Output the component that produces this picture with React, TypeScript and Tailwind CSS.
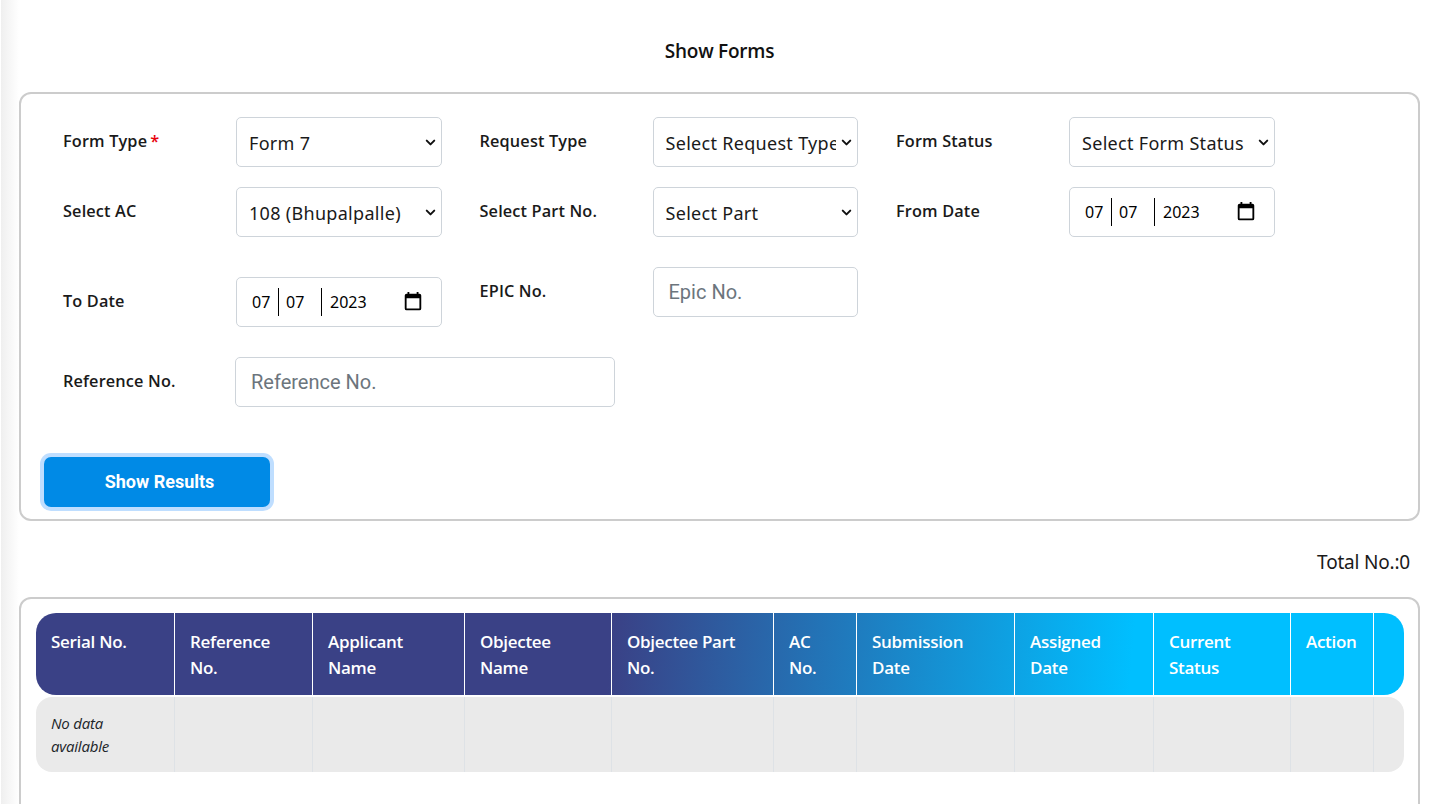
import React from "react"
import { ChevronDown } from "lucide-react"

const font = "font-['Open_Sans','Noto_Sans',sans-serif]"

function Label({ children }: { children: React.ReactNode }) {
  return (
    <label className="w-[173px] shrink-0 mb-[2px] text-[16.3px] leading-6 font-[550] text-[#1a1a1a] tracking-[0.15px]">
      {children}
    </label>
  )
}

function Select({ value, options, width = "w-[206px]" }: { value: string; options: string[]; width?: string }) {
  return (
    <div className={`relative h-[50px] ${width}`}>
      <select
        defaultValue={value}
        className="appearance-none w-full h-full pl-3 pr-[21px] pt-[2px] rounded-[5px] border border-[#ced4da] bg-white text-[18px] text-[#1a1a1a] tracking-[0.3px] font-['Noto_Sans',sans-serif]"
      >
        {options.map((o) => (
          <option key={o}>{o}</option>
        ))}
      </select>
      <ChevronDown size={15} strokeWidth={3.2} className="absolute right-[4px] top-[18px] text-[#111] pointer-events-none" />
    </div>
  )
}

function DateBox() {
  return (
    <div className="w-[206px] h-[50px] flex items-center rounded-[5px] border border-[#ced4da] bg-white text-[16px] text-black font-['Noto_Sans',sans-serif]">
      <span className="ml-[15px] w-[26px]">07</span>
      <span className="w-px h-7 bg-black" />
      <span className="ml-[7px] w-[35px]">07</span>
      <span className="w-px h-7 bg-black" />
      <span className="ml-2 w-[72px]">2023</span>
      <svg width="22" height="22" viewBox="0 0 24 24" className="text-black">
        <path
          fill="currentColor"
          d="M19 3h-1V1h-2v2H8V1H6v2H5a2 2 0 0 0-2 2v14a2 2 0 0 0 2 2h14a2 2 0 0 0 2-2V5a2 2 0 0 0-2-2zm0 16H5V8h14v11z"
        />
      </svg>
    </div>
  )
}

const headers = [
  "Serial No.",
  "Reference No.",
  "Applicant Name",
  "Objectee Name",
  "Objectee Part No.",
  "AC No.",
  "Submission Date",
  "Assigned Date",
  "Current Status",
  "Action",
  "",
]

const gridCols = "grid grid-cols-[139px_138px_152px_147px_162px_83px_158px_139px_137px_83px_30px]"

export default function App() {
  return (
    <div className={`relative min-h-[804px] h-[804px] overflow-hidden bg-white pl-[19px] pr-[11px] ${font}`}>
      <div className="absolute left-px top-0 h-full w-[18px] bg-gradient-to-r from-[#efefef] to-white" />

      <h1 className="relative pt-[38px] pb-[27px] h-[92px] text-center text-[19px] leading-[27px] font-semibold text-[#111] tracking-[-0.25px]">
        Show Forms
      </h1>

      <section className="relative bg-white h-[429px] rounded-[12px] border-2 border-[#cccccc] pl-[42px] pt-[23px] flex flex-col">
        <div className="flex items-center">
          <div className="w-[416.5px] flex items-center">
            <Label>
              Form Type<span className="ml-[3px] text-red-600">*</span>
            </Label>
            <Select value="Form 7" options={["Form 7", "Form 6", "Form 8"]} />
          </div>
          <div className="w-[416.5px] flex items-center">
            <Label>Request Type</Label>
            <Select value="Select Request Type" options={["Select Request Type"]} width="w-[205px]" />
          </div>
          <div className="flex items-center">
            <Label>Form Status</Label>
            <Select value="Select Form Status" options={["Select Form Status"]} />
          </div>
        </div>

        <div className="flex items-center mt-5">
          <div className="w-[416.5px] flex items-center">
            <Label>Select AC</Label>
            <Select value="108 (Bhupalpalle)" options={["108 (Bhupalpalle)"]} />
          </div>
          <div className="w-[416.5px] flex items-center">
            <Label>Select Part No.</Label>
            <Select value="Select Part" options={["Select Part"]} width="w-[205px]" />
          </div>
          <div className="flex items-center">
            <Label>From Date</Label>
            <DateBox />
          </div>
        </div>

        <div className="flex items-start mt-[30px]">
          <div className="w-[416.5px] flex items-center mt-[10px]">
            <Label>To Date</Label>
            <DateBox />
          </div>
          <div className="flex items-center">
            <Label>EPIC No.</Label>
            <input
              placeholder="Epic No."
              className="w-[205px] h-[50px] px-[15px] rounded-[5px] border border-[#ced4da] bg-white text-[20px] font-['Roboto',sans-serif] placeholder:text-[#6c757d]"
            />
          </div>
        </div>

        <div className="flex items-center mt-[30px]">
          <Label>Reference No.</Label>
          <input
            placeholder="Reference No."
            className="-ml-px w-[380px] h-[50px] px-[15px] rounded-[5px] border border-[#ced4da] bg-white text-[20px] font-['Roboto',sans-serif] placeholder:text-[#6c757d]"
          />
        </div>

        <button className="mt-[50px] -ml-[19px] w-[226px] h-[50px] rounded-[7px] bg-[#008ae6] ring-4 ring-[#bfdeff] text-white text-[18px] font-bold font-['Roboto',sans-serif] pl-[5px] pb-[2px]">
          Show Results
        </button>
      </section>

      <div className="relative h-[76px] pt-[28px] pr-[10px] text-right text-[19px] leading-[27px] text-[#1a1a1a] tracking-[-0.2px] font-['Noto_Sans',sans-serif]">
        Total No.:0
      </div>

      <section className="relative bg-white h-[260px] rounded-[12px] border-2 border-[#cccccc] pl-[15px] pt-[14px]">
        <div className={`${gridCols} w-[1368px] h-[82px] rounded-[20px] overflow-hidden bg-[linear-gradient(95deg,#3a4186_42%,#00bfff_80%)]`}>
          {headers.map((h, i) => (
            <div
              key={i}
              className={`pl-[15px] pr-5 pt-[16px] text-[17px] leading-[26px] font-semibold text-white tracking-[-0.3px] ${i < headers.length - 1 ? "border-r border-white" : ""}`}
            >
              {h}
            </div>
          ))}
        </div>
        <div className={`${gridCols} w-[1368px] h-[75px] mt-[2px] rounded-[16px] overflow-hidden bg-[#eaeaea]`}>
          {headers.map((_, i) => (
            <div
              key={i}
              className={`pl-[15px] pr-[60px] pt-[15px] text-[15px] leading-[23px] italic text-[#212529] tracking-[-0.2px] ${i < headers.length - 1 ? "border-r border-[#dee2e6]" : ""}`}
            >
              {i === 0 ? "No data available" : ""}
            </div>
          ))}
        </div>
      </section>
    </div>
  )
}
